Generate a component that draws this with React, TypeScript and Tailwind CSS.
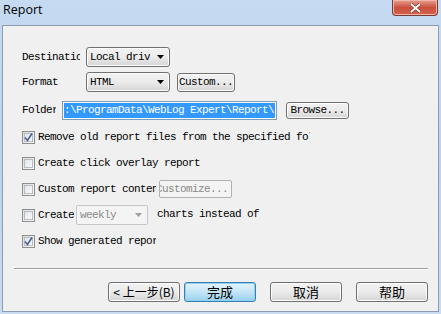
import React from 'react'

const mono = { fontFamily: '"Liberation Mono", "DejaVu Sans Mono", monospace' }

function Check({ on }: { on?: boolean }) {
  return (
    <span className="flex h-[13px] w-[13px] shrink-0 items-center justify-center border border-[#8e8f8f] bg-gradient-to-br from-[#dcdcdc] to-[#fbfbfb]">
      <span className="flex h-[9px] w-[9px] items-center justify-center border border-[#b8bcc4] bg-gradient-to-br from-[#e4e6ea] to-[#f8f9fa]">
        {on && (
          <svg width="9" height="9" viewBox="0 0 9 9" className="overflow-visible">
            <path d="M1 4.5 L3.5 7.5 L8 0.5" fill="none" stroke="#4a5f97" strokeWidth="1.6" />
          </svg>
        )}
      </span>
    </span>
  )
}

function Arrow({ gray }: { gray?: boolean }) {
  return (
    <svg width="7" height="4" viewBox="0 0 7 4">
      <path d="M0 0 H7 L3.5 4 Z" fill={gray ? '#a0a0a0' : '#000'} />
    </svg>
  )
}

function Combo({ text, w }: { text: string; w: string }) {
  return (
    <div
      className={`flex h-[20px] ${w} items-center justify-between rounded-[3px] border border-[#707070] bg-gradient-to-b from-[#f2f2f2] via-[#ebebeb] to-[#d5d5d5] pl-[3px] pr-[5px] shadow-[inset_0_0_0_1px_#fcfcfc]`}
    >
      <span className="overflow-hidden whitespace-nowrap text-[11px] tracking-[-0.6px] text-black" style={mono}>
        {text}
      </span>
      <Arrow />
    </div>
  )
}

function Btn({ children, w, h = 'h-[19px]' }: { children: React.ReactNode; w: string; h?: string }) {
  return (
    <div
      className={`flex ${h} ${w} items-center justify-center overflow-hidden whitespace-nowrap rounded-[3px] border border-[#707070] bg-gradient-to-b from-[#f2f2f2] via-[#ebebeb] to-[#d5d5d5] text-[11px] tracking-[-0.6px] text-black shadow-[inset_0_0_0_1px_#fcfcfc]`}
      style={mono}
    >
      {children}
    </div>
  )
}

function CnBtn({ children, primary }: { children: React.ReactNode; primary?: boolean }) {
  return (
    <div
      className={`flex h-[20px] w-[72px] items-center justify-center rounded-[3px] border text-[13px] text-black ${
        primary
          ? 'border-[#3c7fb1] bg-gradient-to-b from-[#e5f4fc] via-[#c4e5f6] to-[#98d1ef] shadow-[inset_0_0_0_1px_#8ed0f4]'
          : 'border-[#707070] bg-gradient-to-b from-[#f2f2f2] via-[#ebebeb] to-[#d5d5d5] shadow-[inset_0_0_0_1px_#fcfcfc]'
      }`}
      style={{ fontFamily: '"Noto Sans CJK SC", "Noto Sans", sans-serif' }}
    >
      {children}
    </div>
  )
}

export default function App() {
  return (
    <div className="flex h-[314px] w-[441px] flex-col bg-gradient-to-b from-[#c6dbf1] via-[#bcd3ec] to-[#c9dcf0] px-[2px] pb-[2px]">
      {/* Title bar */}
      <div className="relative flex h-[25px] shrink-0 items-start">
        <span className="pl-[1px] pt-[1px] text-[12.5px] text-black" style={{ fontFamily: '"Open Sans", "Noto Sans", sans-serif' }}>
          Report
        </span>
        <div className="absolute right-[1px] top-0 flex h-[16px] w-[46px] items-center justify-center rounded-b-[4px] border border-t-0 border-[#7a3a32] bg-gradient-to-b from-[#e8a193] via-[#c9503c] to-[#d4634f] shadow-[inset_0_0_0_1px_#f0b6a8]">
          <svg width="11" height="10" viewBox="0 0 11 10">
            <path d="M1 1 L10 9 M10 1 L1 9" stroke="#5a2c26" strokeWidth="3" />
            <path d="M1 1 L10 9 M10 1 L1 9" stroke="#fff" strokeWidth="1.8" />
          </svg>
        </div>
      </div>

      {/* Client area */}
      <div className="flex flex-1 flex-col border border-[#8d9cb0] bg-[#f0f0f0] pl-[19px] pr-[10px]">
        <div className="mt-[21px] flex h-[20px] items-center">
          <span className="mr-[6px] w-[58px] overflow-hidden whitespace-nowrap text-[11px] tracking-[-0.6px] text-black" style={mono}>
            Destination
          </span>
          <Combo text="Local driv" w="w-[84px]" />
        </div>

        <div className="mt-[5px] flex h-[20px] items-center">
          <span className="w-[64px] whitespace-nowrap text-[11px] tracking-[-0.6px] text-black" style={mono}>
            Format
          </span>
          <Combo text="HTML" w="w-[84px]" />
          <div className="ml-[7px]">
            <Btn w="w-[58px]">Custom...</Btn>
          </div>
        </div>

        <div className="mt-[9px] flex h-[19px] items-center">
          <span className="w-[34px] overflow-hidden whitespace-nowrap text-[11px] tracking-[-0.6px] text-black" style={mono}>
            Folder
          </span>
          <div className="ml-[6px] flex h-[19px] w-[215px] items-center overflow-hidden border border-[#7f9db9] bg-white p-[1px]">
            <span className="flex h-full w-full items-center overflow-hidden whitespace-nowrap bg-[#3399ff] text-[11px] tracking-[-0.6px] text-white" style={mono}>
              :\ProgramData\WebLog Expert\Report\
            </span>
          </div>
          <div className="ml-[9px]">
            <Btn w="w-[63px]" h="h-[17px]">Browse...</Btn>
          </div>
        </div>

        <div className="mt-[4px] flex flex-col">
          <div className="flex h-[26px] items-center">
            <Check on />
            <span className="ml-[3px] w-[272px] overflow-hidden whitespace-nowrap text-[11px] tracking-[-0.6px] text-black" style={mono}>
              Remove old report files from the specified folder
            </span>
          </div>
          <div className="flex h-[26px] items-center">
            <Check />
            <span className="ml-[3px] whitespace-nowrap text-[11px] tracking-[-0.6px] text-black" style={mono}>
              Create click overlay report
            </span>
          </div>
          <div className="flex h-[26px] items-center">
            <Check />
            <span className="ml-[3px] w-[118px] overflow-hidden whitespace-nowrap text-[11px] tracking-[-0.6px] text-black" style={mono}>
              Custom report content
            </span>
            <div className="ml-[3px] flex h-[18px] w-[73px] items-center overflow-hidden whitespace-nowrap rounded-[2px] border border-[#adb2b5] bg-[#f4f4f4] text-[11px] tracking-[-0.6px] text-[#8a8a8a]" style={mono}>
              <span className="-ml-[4px]">Customize...</span>
            </div>
          </div>
          <div className="flex h-[26px] items-center">
            <Check />
            <span className="ml-[3px] w-[38px] whitespace-nowrap text-[11px] tracking-[-0.6px] text-black" style={mono}>
              Create
            </span>
            <div className="flex h-[20px] w-[72px] items-center justify-between rounded-[2px] border border-[#c5c8cb] bg-[#f4f4f4] pl-[3px] pr-[5px]">
              <span className="text-[11px] tracking-[-0.6px] text-[#8a8a8a]" style={mono}>
                weekly
              </span>
              <Arrow gray />
            </div>
            <span className="ml-[9px] mt-[-2px] whitespace-nowrap text-[11px] tracking-[-0.6px] text-black" style={mono}>
              charts instead of
            </span>
          </div>
          <div className="flex h-[26px] items-center">
            <Check on />
            <span className="ml-[3px] w-[118px] overflow-hidden whitespace-nowrap text-[11px] tracking-[-0.6px] text-black" style={mono}>
              Show generated report
            </span>
          </div>
        </div>

        <div className="-ml-[8px] mt-[14px] border-t border-b border-t-[#a0a0a0] border-b-white" />

        <div className="mt-[12px] flex items-center justify-end">
          <CnBtn>
            <span className="text-[12px]">&lt; 上一步(B)</span>
          </CnBtn>
          <div className="ml-[4px]">
            <CnBtn primary>完成</CnBtn>
          </div>
          <div className="ml-[14px]">
            <CnBtn>取消</CnBtn>
          </div>
          <div className="ml-[14px]">
            <CnBtn>帮助</CnBtn>
          </div>
        </div>
      </div>
    </div>
  )
}
